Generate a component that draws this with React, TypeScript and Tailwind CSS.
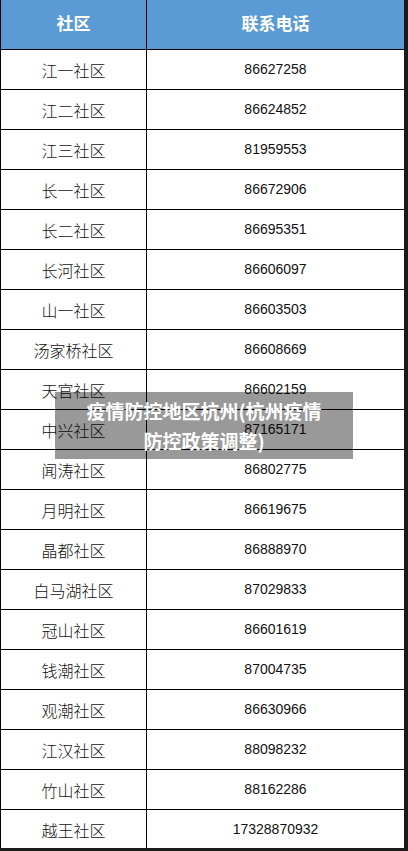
const rows: [string, string][] = [
  ['江一社区', '86627258'],
  ['江二社区', '86624852'],
  ['江三社区', '81959553'],
  ['长一社区', '86672906'],
  ['长二社区', '86695351'],
  ['长河社区', '86606097'],
  ['山一社区', '86603503'],
  ['汤家桥社区', '86608669'],
  ['天官社区', '86602159'],
  ['中兴社区', '87165171'],
  ['闻涛社区', '86802775'],
  ['月明社区', '86619675'],
  ['晶都社区', '86888970'],
  ['白马湖社区', '87029833'],
  ['冠山社区', '86601619'],
  ['钱潮社区', '87004735'],
  ['观潮社区', '86630966'],
  ['江汉社区', '88098232'],
  ['竹山社区', '88162286'],
  ['越王社区', '17328870932'],
];

export default function App() {
  return (
    <div className="relative w-[408px] h-[851px] bg-[#1a1a1a] overflow-hidden font-['Liberation_Sans','Noto_Sans_CJK_SC',sans-serif]">
      {/* table */}
      <div className="w-[404px] h-[848px] bg-white border-l border-black overflow-hidden">
        <div className="flex h-[50px] bg-[#5b9bd5] text-white text-[17px] font-bold border-b border-black">
          <div className="w-[146px] flex items-center justify-center border-r border-black">社区</div>
          <div className="flex-1 flex items-center justify-center">联系电话</div>
        </div>
        {rows.map(([name, phone]) => (
          <div key={name} className="flex h-[40px] border-b-[1.5px] border-black text-[#111]">
            <div className="w-[146px] flex items-center justify-center border-r border-black text-[16px] font-['Noto_Sans_CJK_SC',sans-serif] font-light">
              {name}
            </div>
            <div className="flex-1 flex items-center justify-center text-[14px]">{phone}</div>
          </div>
        ))}
      </div>

      {/* overlay caption */}
      <div className="absolute left-[55px] top-[392px] w-[298px] h-[67px] bg-black/40 flex flex-col items-center justify-center">
        <p className="text-white text-[19px] font-bold leading-[30px] text-center font-['Noto_Sans_CJK_SC',sans-serif]">
          疫情防控地区杭州(杭州疫情
          <br />
          防控政策调整)
        </p>
      </div>
    </div>
  );
}
